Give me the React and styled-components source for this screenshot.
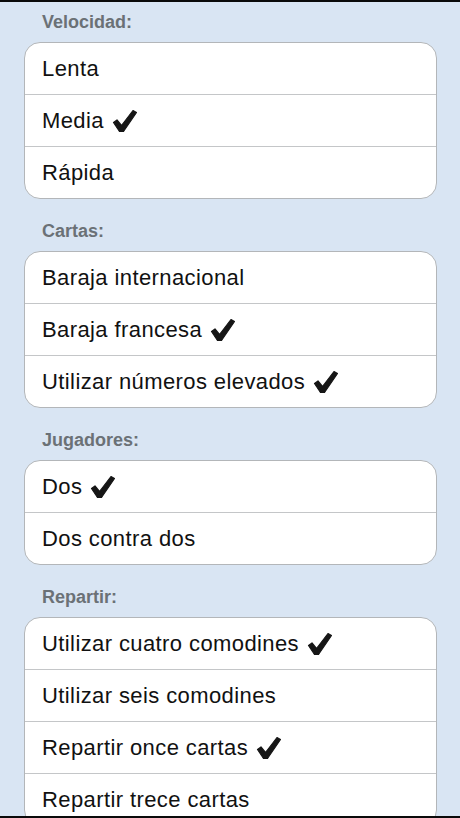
import React from "react";
import styled, { createGlobalStyle } from "styled-components";

const GlobalStyle = createGlobalStyle`
  html, body {
    margin: 0;
    padding: 0;
    background-color: #d9e5f3;
    overflow: hidden;
  }
  body {
    font-family: "Liberation Sans", Arial, Helvetica, sans-serif;
  }
`;

const Page = styled.div`
  min-height: 100vh;
  border-top: 2px solid #0a0a0a;
  padding: 0 23px 40px 24px;
  box-sizing: border-box;
`;

const Section = styled.section`
  & + & {
    margin-top: 12px;
  }
`;

const Header = styled.div`
  height: 40px;
  display: flex;
  align-items: center;
  padding-left: 18px;
  font-size: 18px;
  font-weight: bold;
  color: #6b7176;
`;

const Card = styled.div`
  background-color: #ffffff;
  border: 1px solid #b3b6b9;
  border-radius: 16px;
  overflow: hidden;
`;

const Row = styled.div`
  height: 51px;
  display: flex;
  align-items: center;
  padding-left: 17px;
  font-size: 22px;
  letter-spacing: 0.4px;
  color: #111111;
  & + & {
    border-top: 1px solid #c4c6c8;
  }
`;

const Check = styled.svg`
  width: 26px;
  height: 24px;
  margin-left: 8px;
  margin-top: 1px;
`;

const BottomBar = styled.div`
  position: fixed;
  left: 0;
  right: 0;
  bottom: 0;
  height: 2px;
  background-color: #0a0a0a;
`;

const CheckMark = () => (
  <Check viewBox="0 0 26 24">
    <path
      d="M1.5 13.5 L5 11 L9.5 16.5 L21 1.5 L24.5 3.5 L11.5 22.5 L7.5 22.5 Z"
      fill="#161616"
      stroke="#161616"
      strokeWidth="1.2"
      strokeLinejoin="round"
    />
  </Check>
);

const groups = [
  {
    title: "Velocidad:",
    items: [
      ["Lenta", false],
      ["Media", true],
      ["Rápida", false],
    ],
  },
  {
    title: "Cartas:",
    items: [
      ["Baraja internacional", false],
      ["Baraja francesa", true],
      ["Utilizar números elevados", true],
    ],
  },
  {
    title: "Jugadores:",
    items: [
      ["Dos", true],
      ["Dos contra dos", false],
    ],
  },
  {
    title: "Repartir:",
    items: [
      ["Utilizar cuatro comodines", true],
      ["Utilizar seis comodines", false],
      ["Repartir once cartas", true],
      ["Repartir trece cartas", false],
    ],
  },
];

export default function App() {
  return (
    <>
      <GlobalStyle />
      <Page>
        {groups.map((g) => (
          <Section key={g.title}>
            <Header>{g.title}</Header>
            <Card>
              {g.items.map(([label, checked]) => (
                <Row key={label}>
                  {label}
                  {checked && <CheckMark />}
                </Row>
              ))}
            </Card>
          </Section>
        ))}
      </Page>
      <BottomBar />
    </>
  );
}
